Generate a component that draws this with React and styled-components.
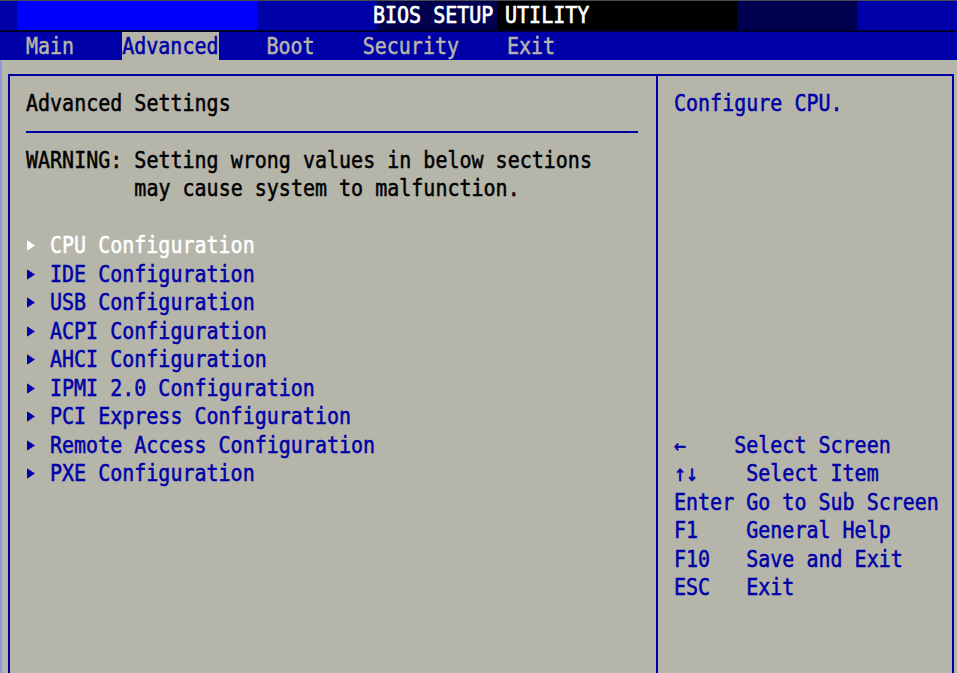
import React from "react";
import styled, { createGlobalStyle } from "styled-components";

const BLUE = "#0000a8";
const GRAY = "#b5b5aa";

const GlobalStyle = createGlobalStyle`
  html, body {
    margin: 0;
    padding: 0;
    overflow: hidden;
    background: ${GRAY};
  }
  body {
    font-family: "DejaVu Sans Mono", "Liberation Mono", monospace;
    -webkit-text-stroke: 0.45px currentColor;
  }
`;

const Screen = styled.div`
  width: 957px;
  height: 673px;
  display: flex;
  flex-direction: column;
  overflow: hidden;
  background: ${GRAY};
`;

const TitleBar = styled.header`
  display: flex;
  height: 29px;
  border-top: 1px solid #4a4a52;
  border-bottom: 2px solid #00002a;
`;

const Segment = styled.div`
  width: ${(p) => (p.$w ? `${p.$w}px` : "auto")};
  flex: ${(p) => (p.$w ? "none" : "1")};
  background: ${(p) => p.$bg};
  color: #fff;
  font-size: 20px;
  line-height: 29px;
  white-space: pre;
  text-indent: -2px;
  -webkit-text-stroke: 0.6px #fff;

  span {
    display: inline-block;
    transform: scaleY(1.18);
  }
`;

const MenuBar = styled.nav`
  display: flex;
  gap: 48px;
  height: 28px;
  padding-left: 26px;
  background: ${BLUE};
`;

const Tab = styled.div`
  font-size: 20px;
  line-height: 28px;
  background: ${(p) => (p.$active ? GRAY : "transparent")};
  color: ${(p) => (p.$active ? BLUE : GRAY)};

  span {
    display: inline-block;
    transform: scaleY(1.15);
  }
`;

const Body = styled.main`
  flex: 1;
  padding: 14px 0 0 6px;
  border-left: 2px solid #8f98dc;
`;

const Panel = styled.section`
  display: flex;
  box-sizing: border-box;
  width: 946px;
  height: 700px;
  border: 2px solid ${BLUE};
`;

const LeftPane = styled.div`
  box-sizing: border-box;
  width: 648px;
  padding: 12.75px 18px 0 16px;
  border-right: 2px solid ${BLUE};
`;

const RightPane = styled.div`
  flex: 1;
  display: flex;
  flex-direction: column;
  padding: 12.75px 0 0 16px;
`;

const Row = styled.div`
  display: flex;
  align-items: center;
  height: 28.5px;
  line-height: 28.5px;
  font-size: 20px;
  white-space: pre;
  color: ${(p) => p.$color || BLUE};
  transform: scaleY(1.15);
`;

const Rule = styled.div`
  display: flex;
  align-items: center;
  height: 28.5px;

  &::before {
    content: "";
    flex: 1;
    height: 2px;
    background: ${BLUE};
  }
`;

const Spacer = styled.div`
  height: 28.5px;
`;

const PointerSvg = styled.svg`
  flex: none;
  display: block;
  margin: 0 15px 0 1px;
`;

const Pointer = () => (
  <PointerSvg width="8" height="9" viewBox="0 0 8 9">
    <polygon points="0,0 8,4.5 0,9" fill="currentColor" />
  </PointerSvg>
);

const HelpList = styled.div`
  margin-top: 313.5px;
`;

const segments = [
  { w: 17, bg: BLUE },
  { w: 240, bg: "#0000ff" },
  { w: 120, bg: BLUE },
  { w: 120, bg: "#000050", text: "BIOS SETUP" },
  { w: 240, bg: "#000000", text: " UTILITY" },
  { w: 120, bg: "#000050" },
  { bg: BLUE },
];

const tabs = ["Main", "Advanced", "Boot", "Security", "Exit"];

const items = [
  "CPU Configuration",
  "IDE Configuration",
  "USB Configuration",
  "ACPI Configuration",
  "AHCI Configuration",
  "IPMI 2.0 Configuration",
  "PCI Express Configuration",
  "Remote Access Configuration",
  "PXE Configuration",
];

const help = [
  "\u2190    Select Screen",
  "\u2191\u2193    Select Item",
  "Enter Go to Sub Screen",
  "F1    General Help",
  "F10   Save and Exit",
  "ESC   Exit",
];

export default function App() {
  return (
    <Screen>
      <GlobalStyle />
      <TitleBar>
        {segments.map((s, i) => (
          <Segment key={i} $w={s.w} $bg={s.bg}>
            {s.text && <span>{s.text}</span>}
          </Segment>
        ))}
      </TitleBar>
      <MenuBar>
        {tabs.map((t) => (
          <Tab key={t} $active={t === "Advanced"}>
            <span>{t}</span>
          </Tab>
        ))}
      </MenuBar>
      <Body>
        <Panel>
          <LeftPane>
            <Row $color="#000">Advanced Settings</Row>
            <Rule />
            <Row $color="#000">WARNING: Setting wrong values in below sections</Row>
            <Row $color="#000">{"         may cause system to malfunction."}</Row>
            <Spacer />
            {items.map((it, i) => (
              <Row key={it} $color={i === 0 ? "#fff" : BLUE}>
                <Pointer />
                {it}
              </Row>
            ))}
          </LeftPane>
          <RightPane>
            <Row>Configure CPU.</Row>
            <HelpList>
              {help.map((h) => (
                <Row key={h}>{h}</Row>
              ))}
            </HelpList>
          </RightPane>
        </Panel>
      </Body>
    </Screen>
  );
}
